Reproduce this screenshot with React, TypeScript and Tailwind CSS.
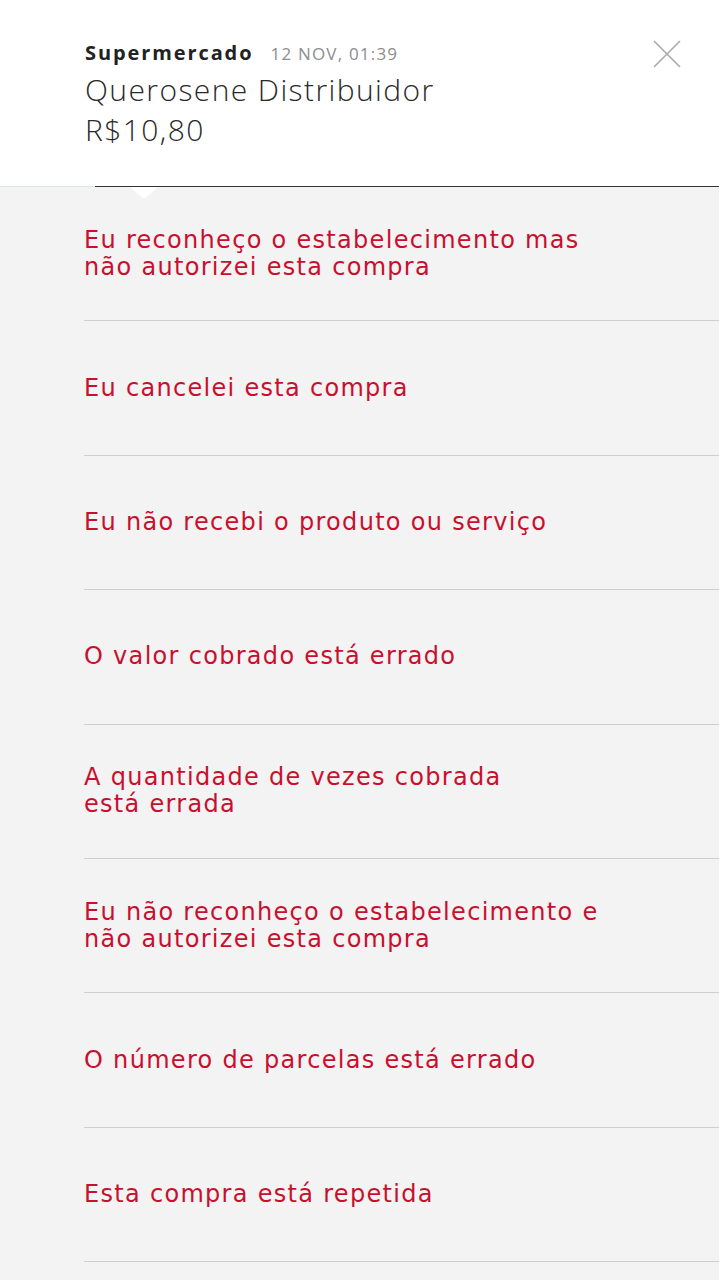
const reasons = [
  ["Eu reconheço o estabelecimento mas", "não autorizei esta compra"],
  ["Eu cancelei esta compra"],
  ["Eu não recebi o produto ou serviço"],
  ["O valor cobrado está errado"],
  ["A quantidade de vezes cobrada", "está errada"],
  ["Eu não reconheço o estabelecimento e", "não autorizei esta compra"],
  ["O número de parcelas está errado"],
  ["Esta compra está repetida"],
];

const CloseIcon = () => (
  <svg width="30" height="30" viewBox="0 0 30 30" fill="none">
    <path d="M2 2L28 28M28 2L2 28" stroke="#a9a9a9" strokeWidth="1.6" />
  </svg>
);

export default function App() {
  return (
    <div className="min-h-[1280px] w-full bg-[#f3f3f3] font-['Open_Sans',sans-serif]">
      <header className="relative bg-white">
        <div className="flex justify-between px-[85px] pt-[38px] pb-[36px] pr-[37px]">
          <div className="flex flex-col">
            <div className="flex items-baseline gap-[17px]">
              <span className="text-[20px] font-bold tracking-[1.9px] text-[#222]">Supermercado</span>
              <span className="text-[17px] text-[#8d8d8d] tracking-[1.2px]">12 NOV, 01:39</span>
            </div>
            <span className="mt-[2px] text-[30px] font-light leading-[40px] text-[#2a2a2a] tracking-[1.4px]">
              Querosene Distribuidor
            </span>
            <span className="text-[30px] font-light leading-[40px] text-[#2a2a2a] tracking-[1.4px]">R$10,80</span>
          </div>
          <div className="pt-[1px]">
            <CloseIcon />
          </div>
        </div>
        <div className="flex h-[1px]">
          <div className="w-[95px] bg-[#dbe6e6]" />
          <div className="flex-1 bg-[#333]" />
        </div>
        <div className="absolute left-[130px] top-full h-0 w-0 border-x-[14px] border-t-[12px] border-x-transparent border-t-white" />
      </header>
      <ul className="pl-[84px]">
        {reasons.map((lines, i) => (
          <li
            key={i}
            className="flex h-[134.4px] flex-col justify-center border-b border-[#cfcfcf] font-['DejaVu_Sans',sans-serif] text-[24px] leading-[27px] tracking-[1.3px] text-[#c8102e]"
          >
            {lines.map((l, j) => (
              <span key={j}>{l}</span>
            ))}
          </li>
        ))}
      </ul>
    </div>
  );
}
